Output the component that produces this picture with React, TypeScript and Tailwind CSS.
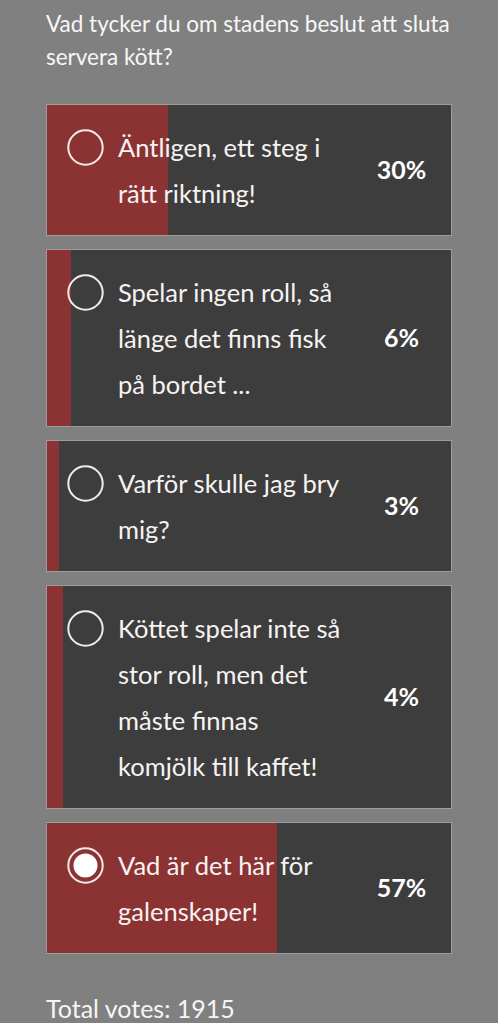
import * as React from 'react';

type Option = { label: string; pct: number; selected?: boolean };

const OPTIONS: Option[] = [
  { label: 'Äntligen, ett steg i rätt riktning!', pct: 30 },
  { label: 'Spelar ingen roll, så länge det finns fisk på bordet ...', pct: 6 },
  { label: 'Varför skulle jag bry mig?', pct: 3 },
  { label: 'Köttet spelar inte så stor roll, men det måste finnas komjölk till kaffet!', pct: 4 },
  { label: 'Vad är det här för galenskaper!', pct: 57, selected: true },
];

function Radio({ checked }: { checked?: boolean }) {
  return (
    <svg width="37" height="37" viewBox="0 0 37 37" className="shrink-0">
      <circle cx="18.5" cy="18.5" r="17.2" fill="none" stroke="#f3eaea" strokeWidth="2" />
      {checked && <circle cx="18.5" cy="18.5" r="12" fill="#ffffff" />}
    </svg>
  );
}

function PollOption({ option }: { option: Option }) {
  return (
    <div className="relative border border-[#9d9d9d] bg-[#3d3d3d]">
      {/* result bar */}
      <div className="absolute inset-y-0 left-0 bg-[#8b3333]" style={{ width: option.pct + '%' }} />
      <div className="relative flex items-stretch py-[19px] pl-[20px]">
        <div className="flex h-[46px] items-center">
          <Radio checked={option.selected} />
        </div>
        <div className="ml-[14px] w-[232px] text-[25.5px] leading-[46px] text-[#f7f3f3]">{option.label}</div>
        <div className="flex flex-1 items-center justify-center pl-[2px] text-[25px] font-bold text-white">
          {option.pct}%
        </div>
      </div>
    </div>
  );
}

export default function App() {
  return (
    <div className="min-h-screen bg-[#808080] px-[46px] pt-[7px] font-['Lato',sans-serif]">
      <p className="text-[22.5px] leading-[33px] text-[#f7f7f7]">
        Vad tycker du om stadens beslut att sluta servera kött?
      </p>
      <div className="mt-[31px] flex flex-col gap-[13px]">
        {OPTIONS.map(o => (
          <PollOption key={o.label} option={o} />
        ))}
      </div>
      <p className="mt-[36px] text-[25px] leading-[36px] text-[#f5f5f5]">Total votes: 1915</p>
    </div>
  );
}
